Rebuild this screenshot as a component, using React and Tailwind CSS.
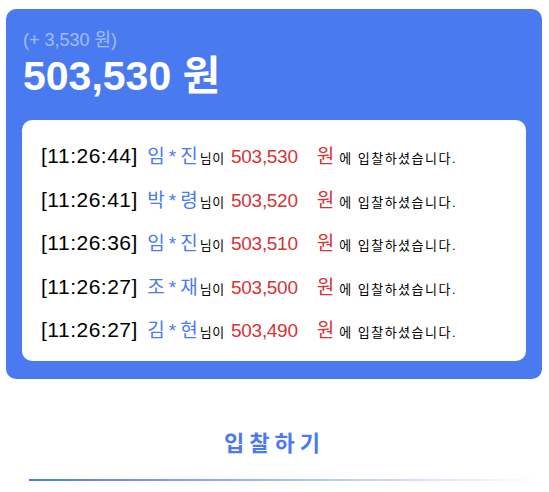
import React from "react";

const rows = [
  { t: "11:26:44", a: "임", b: "진", amt: "503,530" },
  { t: "11:26:41", a: "박", b: "령", amt: "503,520" },
  { t: "11:26:36", a: "임", b: "진", amt: "503,510" },
  { t: "11:26:27", a: "조", b: "재", amt: "503,500" },
  { t: "11:26:27", a: "김", b: "현", amt: "503,490" },
];

export default function App() {
  return (
    <div
      className="w-[549px] h-[492px] bg-white overflow-hidden"
      style={{ fontFamily: '"Liberation Sans", "Noto Sans CJK KR", sans-serif' }}
    >
      <div className="ml-[6px] mr-[7px] mt-[9px] rounded-[10px] bg-[#4a7af0] px-[16px] pt-[21px] pb-[18px]">
        <div className="pl-[1px] text-[18px] leading-[20px] text-white/50">(+ 3,530 원)</div>
        <div className="pl-[1px] mt-[3px] text-[41px] leading-[46px] font-bold text-white">503,530 원</div>
        <div className="mt-[21px] rounded-[10px] bg-white pl-[19px] pt-[14px] pb-[9.5px]">
          {rows.map((r, i) => (
            <div key={i} className="flex h-[43.5px] items-center">
              <span className="whitespace-nowrap">
                <span className="text-[21px] tracking-[0.5px] text-black">[{r.t}]</span>{" "}
                <span className="ml-[5px] text-[19px] text-[#4a7af0]">
                  {r.a}
                  <span className="mx-[4px]">*</span>
                  {r.b}
                </span>
                <span className="ml-[2px] text-[13px] tracking-[0.5px] text-black">님이</span>{" "}
                <span className="ml-[2px] text-[19px] tracking-[-0.3px] text-[#d63333]">{r.amt}</span>
                <span className="ml-[19px] text-[19px] text-[#d63333]">원</span>
                <span className="ml-[5px] text-[13px] tracking-[1.5px] text-black">에 입찰하셨습니다.</span>
              </span>
            </div>
          ))}
        </div>
      </div>
      <div className="mt-[28px] flex h-[72px] items-center justify-center">
        <span className="text-[22px] font-bold tracking-[5px] text-[#4a7af0]">입찰하기</span>
      </div>
      <div className="ml-[29px] mr-[9px] h-[2px] bg-gradient-to-r from-[#4a7af0] to-transparent" />
    </div>
  );
}
